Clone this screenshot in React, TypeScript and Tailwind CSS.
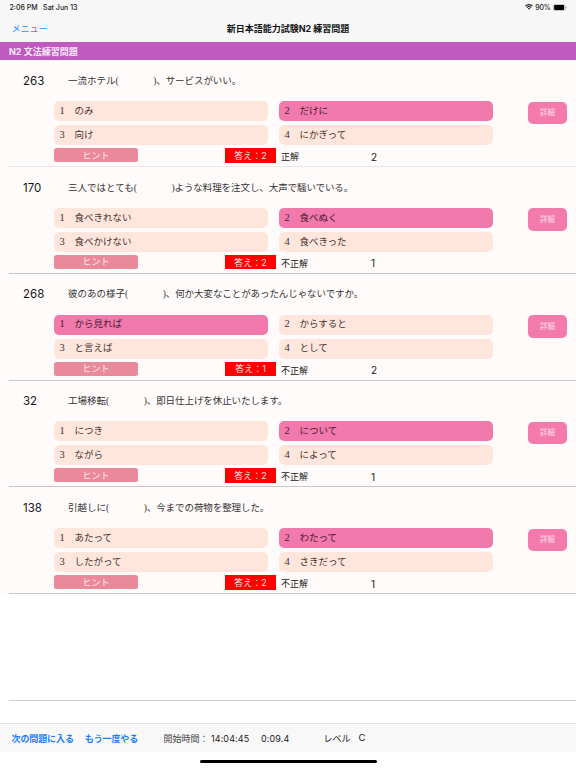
import clsx from "clsx";

type Question = {
  id: number;
  before: string;
  after: string;
  choices: string[];
  selected: number;
  answer: number;
  result: string;
  count: number;
};

const questions: Question[] = [
  {
    id: 263,
    before: "一流ホテル",
    after: "、サービスがいい。",
    choices: ["のみ", "だけに", "向け", "にかぎって"],
    selected: 2,
    answer: 2,
    result: "正解",
    count: 2,
  },
  {
    id: 170,
    before: "三人ではとても",
    after: "ような料理を注文し、大声で騒いでいる。",
    choices: ["食べきれない", "食べぬく", "食べかけない", "食べきった"],
    selected: 2,
    answer: 2,
    result: "不正解",
    count: 1,
  },
  {
    id: 268,
    before: "彼のあの様子",
    after: "、何か大変なことがあったんじゃないですか。",
    choices: ["から見れば", "からすると", "と言えば", "として"],
    selected: 1,
    answer: 1,
    result: "不正解",
    count: 2,
  },
  {
    id: 32,
    before: "工場移転",
    after: "、即日仕上げを休止いたします。",
    choices: ["につき", "について", "ながら", "によって"],
    selected: 2,
    answer: 2,
    result: "不正解",
    count: 1,
  },
  {
    id: 138,
    before: "引越しに",
    after: "、今までの荷物を整理した。",
    choices: ["あたって", "わたって", "したがって", "さきだって"],
    selected: 2,
    answer: 2,
    result: "不正解",
    count: 1,
  },
];

const mincho = "font-['Liberation_Serif','Noto_Sans_CJK_JP',serif]";

function StatusBar() {
  return (
    <div className="flex h-[14px] items-center justify-between pl-[9.5px] pr-[9px] text-[7px] leading-none font-medium text-[#222]">
      <div className="flex gap-[5.5px]">
        <span>2:06 PM</span>
        <span>Sat Jun 13</span>
      </div>
      <div className="flex items-center gap-[2.5px]">
        <svg width="8" height="6" viewBox="0 0 16 12" fill="none" stroke="#111" strokeWidth="2.2">
          <path d="M1 4.2a10 10 0 0 1 14 0M3.6 7.1a6.3 6.3 0 0 1 8.8 0" />
          <path d="M8 11.6 5.7 9.2a3.3 3.3 0 0 1 4.6 0z" fill="#111" stroke="none" />
        </svg>
        <span className="tracking-[-0.2px]">90%</span>
        <svg width="14" height="7" viewBox="0 0 14 7">
          <rect x=".4" y=".4" width="11.8" height="6.2" rx="1.6" fill="none" stroke="#999" strokeWidth=".6" />
          <rect x="1.1" y="1.1" width="10" height="4.8" rx="1" fill="#000" />
          <path d="M12.8 2.5q1 .3 1 1t-1 1z" fill="#999" />
        </svg>
      </div>
    </div>
  );
}

function Choice({ no, text, selected }: { no: number; text: string; selected: boolean }) {
  return (
    <button
      type="button"
      className={clsx(
        "flex h-5 items-center rounded-[5px] pl-[5.5px] text-left text-[9.5px] leading-none",
        mincho,
        selected ? "bg-[#f279ac] text-[#481a30]" : "bg-[#ffe6dd] text-[#44322d]",
      )}
    >
      <span className="w-[15px] text-[10.5px]">{no}</span>
      <span className="pt-[1px]">{text}</span>
    </button>
  );
}

function QuestionRow({ q }: { q: Question }) {
  return (
    <li className="ml-[9px] flex h-[106.7px] flex-col border-b border-[#c9c7c9] first:border-[#ece6e8]">
      <div className="flex h-[40.8px] items-center pl-[14px] pt-[1.5px] leading-none">
        <span className="w-[45px] text-[11.5px] text-[#161616]">{q.id}</span>
        <p className={clsx("flex text-[9.5px] text-[#333]", mincho)}>
          <span>{q.before}(</span>
          <span className="ml-[34.5px] tracking-[-0.08px]">){q.after}</span>
        </p>
      </div>
      <div className="flex pl-[45px]">
        <div className="w-[438.5px]">
          <div className="grid grid-cols-2 gap-x-[11.5px] gap-y-1">
            {q.choices.map((c, i) => (
              <Choice key={c} no={i + 1} text={c} selected={q.selected === i + 1} />
            ))}
          </div>
          <div className="mt-[3px] flex h-[15px] leading-none">
            <button
              type="button"
              className="flex h-[14px] w-[84px] items-center justify-center rounded-[2.5px] bg-[#e98999] text-[9px] text-[#fff0f2]"
            >
              ヒント
            </button>
            <span className="ml-[87px] flex h-[14.5px] w-[51px] items-center justify-center bg-[#ff0000] text-[9px] text-[#ffecec]">
              答え：{q.answer}
            </span>
            <span className="w-[95px] pl-[5px] pt-[4px] text-[9px] text-[#222]">{q.result}</span>
            <span className="pt-[3.5px] text-[10px] text-[#222]">{q.count}</span>
          </div>
        </div>
        <button
          type="button"
          className="ml-[35.5px] mt-[0.5px] flex h-[22.5px] w-[39px] items-center justify-center rounded-[5px] bg-[#f27bac] text-[7.5px] text-[#ffdfec]"
        >
          詳細
        </button>
      </div>
    </li>
  );
}

export default function App() {
  return (
    <div className="flex h-[768px] w-[576px] flex-col overflow-hidden bg-white font-['Inter','Noto_Sans_CJK_JP',sans-serif] whitespace-nowrap">
      <header className="h-[42px] shrink-0 bg-[#f7f7f7]">
        <StatusBar />
        <nav className="grid h-[28px] grid-cols-[1fr_auto_1fr] items-center px-[11.5px] leading-none">
          <button type="button" className="justify-self-start text-[9px] text-[#2f8bfa]">
            メニュー
          </button>
          <h1 className="text-[9px] font-bold text-[#111]">新日本語能力試験N2 練習問題</h1>
        </nav>
      </header>
      <h2 className="flex h-[18px] shrink-0 items-center bg-[#c05ac1] pl-[9px] text-[9px] leading-none font-bold text-[#faeafa]">
        N2 文法練習問題
      </h2>
      <main className="h-[663px] shrink-0">
        <ul className="bg-[#fffbfa] pt-[0.5px]">
          {questions.map((q) => (
            <QuestionRow key={q.id} q={q} />
          ))}
        </ul>
        <div className="ml-[9px] h-[107px] border-b border-[#d0d0d0]" />
      </main>
      <footer className="flex h-[29px] shrink-0 items-center border-t border-[#e2e2e2] bg-[#f8f8f8] pl-[11.5px] text-[9px] leading-none text-[#222]">
        <button type="button" className="w-[73.5px] text-left font-bold tracking-[-0.1px] text-[#1a80f8]">
          次の問題に入る
        </button>
        <button type="button" className="w-[78.5px] text-left font-bold tracking-[-0.1px] text-[#1a80f8]">
          もう一度やる
        </button>
        <span className="w-[47.5px] text-[#444]">開始時間：</span>
        <span className="w-[50px] tracking-[0.1px]">14:04:45</span>
        <span className="w-[62.5px] tracking-[0.1px]">0:09.4</span>
        <span className="w-[35px]">レベル</span>
        <span className="text-[9.5px]">C</span>
      </footer>
      <div className="mx-auto mt-[8px] h-[3px] w-[177px] rounded-full bg-black" />
    </div>
  );
}
